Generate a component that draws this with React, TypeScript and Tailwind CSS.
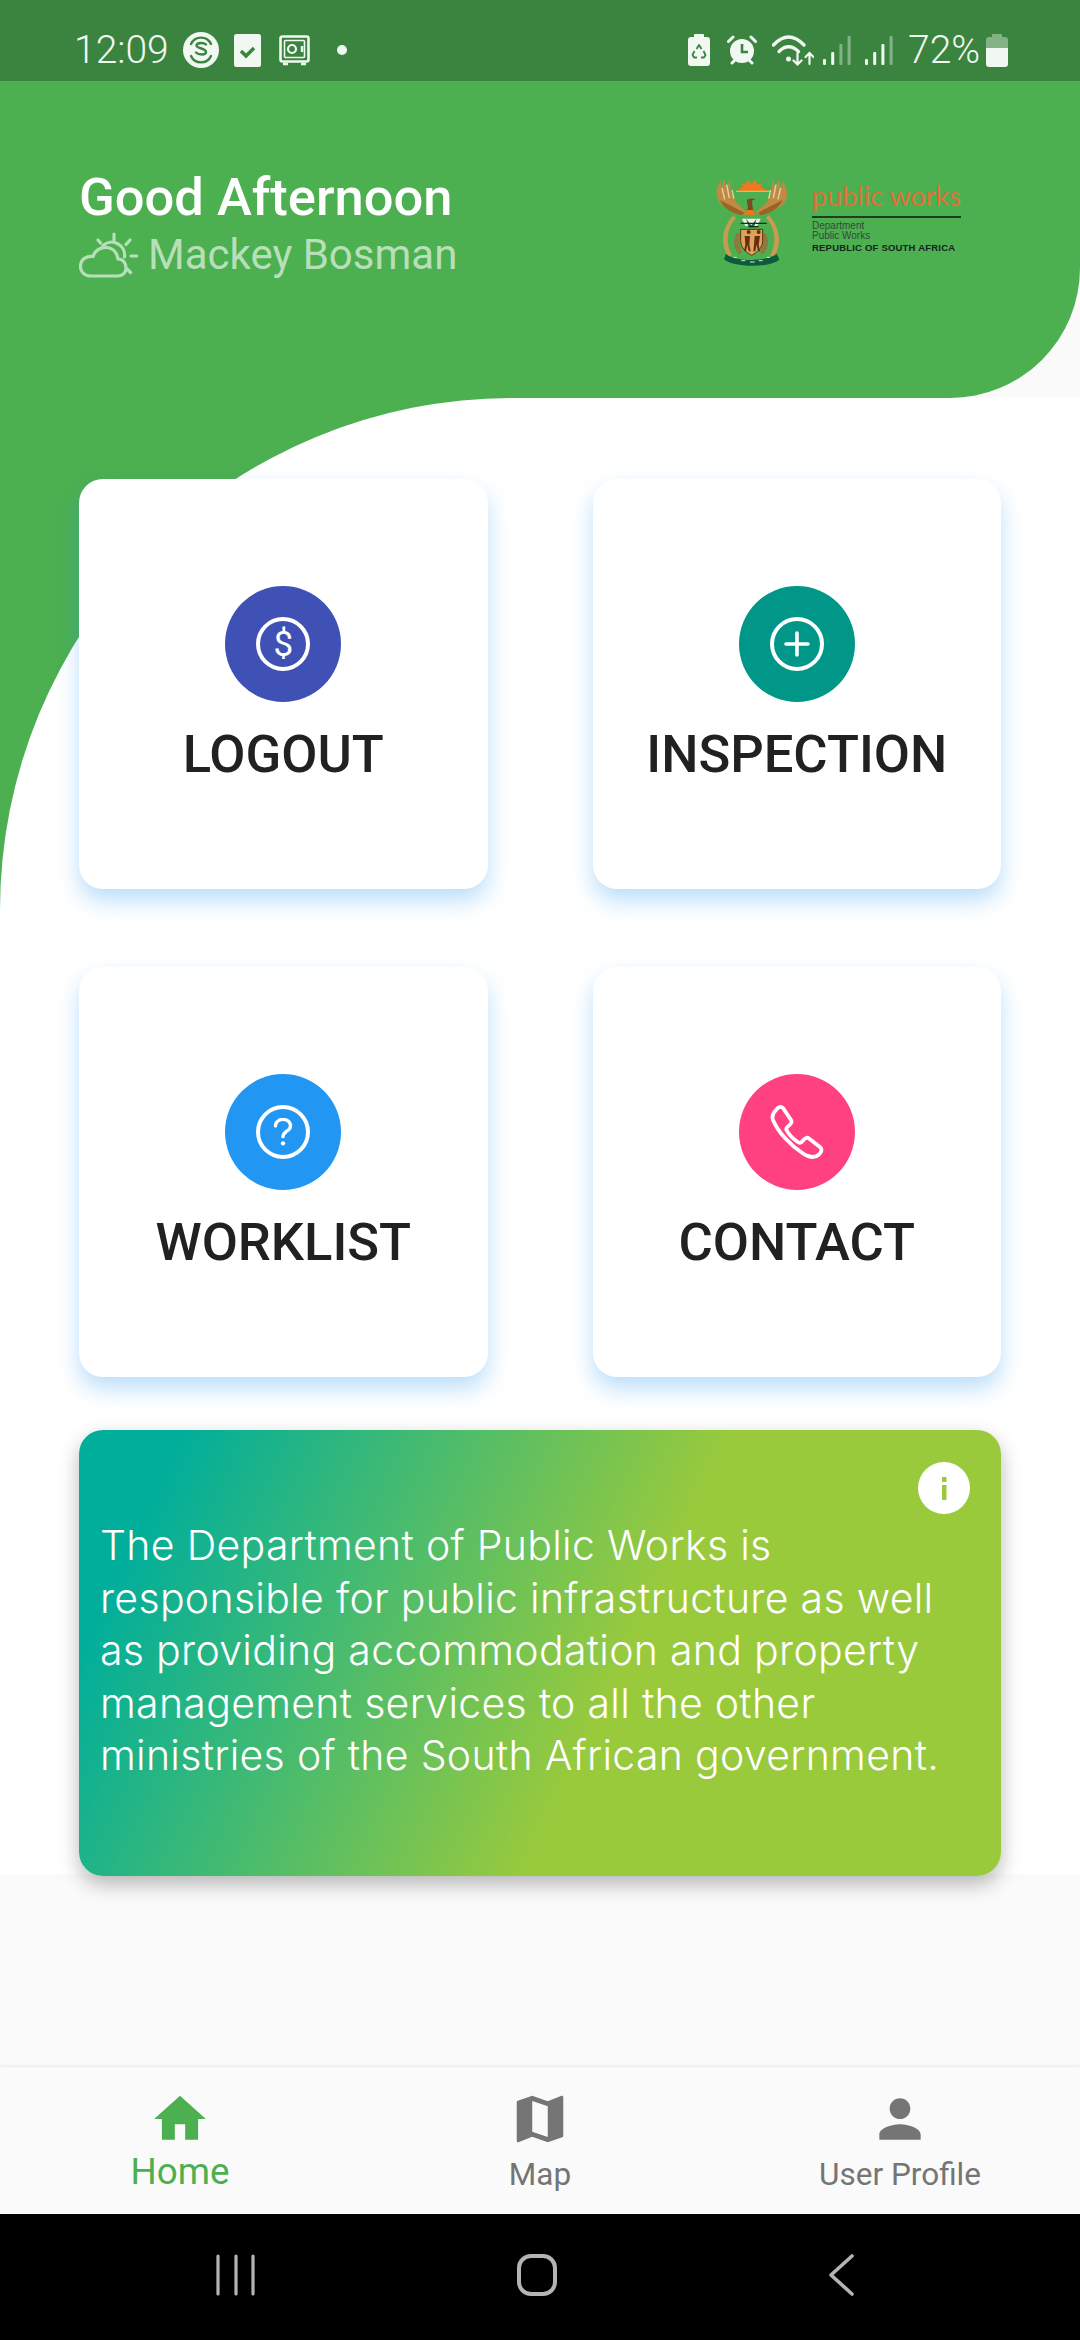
import React from "react";

const Ring = ({ children }: { children: React.ReactNode }) => (
  <div className="w-[54px] h-[54px] rounded-full border-[4.5px] border-white flex items-center justify-center">{children}</div>
);

const menu = [
  {
    label: "LOGOUT",
    bg: "bg-[#3f51b5]",
    icon: (
      <Ring>
        <span className="text-[35px] leading-none text-white">$</span>
      </Ring>
    ),
  },
  {
    label: "INSPECTION",
    bg: "bg-[#009688]",
    icon: (
      <Ring>
        <svg viewBox="0 0 30 30" className="w-[30px] h-[30px]" stroke="white" strokeWidth="3.6" strokeLinecap="round">
          <path d="M15 4v22M4 15h22" />
        </svg>
      </Ring>
    ),
  },
  {
    label: "WORKLIST",
    bg: "bg-[#2196f3]",
    icon: (
      <Ring>
        <svg viewBox="0 0 24 34" className="w-[20px] h-[29px]" fill="none" stroke="white" strokeWidth="4" strokeLinecap="round">
          <path d="M3 9a9 7.500 0 1 1 14 6c-3 2.500-5 3.500-5 7" />
          <circle cx="12" cy="30" r="2.600" fill="white" stroke="none" />
        </svg>
      </Ring>
    ),
  },
  {
    label: "CONTACT",
    bg: "bg-[#ff4081]",
    icon: (
      <svg viewBox="0 0 54 54" className="w-[54px] h-[54px]" fill="none" stroke="white" strokeWidth="3.800" strokeLinejoin="round">
        <path d="M6 5C8 2 11 1 13 3L21 15C22.500 17.500 21 19 19 20.500 17 22 15.500 23 16.500 25 19 30 24 34.500 28.500 37.500 30.500 38.800 32 37 33.500 35 35 33 37 32 39 33.500L50 42C52.500 44 51.500 47 49 49.500 45 53 39 52.500 33 48.500 20 40 8 27 3 15 1.500 11 3 8 6 5Z" />
      </svg>
    ),
  },
];

const infoLines = [
  "The Department of Public Works is",
  "responsible for public infrastructure as well",
  "as providing accommodation and property",
  "management services to all the other",
  "ministries of the South African government.",
];

const StatusLeft = () => (
  <div className="flex items-center">
    <span className="text-[39px] leading-none font-light w-[94px]">12:09</span>
    <svg viewBox="0 0 36 36" className="w-[36px] h-[36px] ml-[15px]">
      <circle cx="18" cy="18" r="18" fill="#f1f7f1" />
      <g fill="none" stroke="#3b8440" strokeWidth="2.400" strokeLinecap="round">
        <path d="M8 12a11 11 0 0 1 20 0" />
        <path d="M8 24a11 11 0 0 0 20 0" />
        <path d="M23 12.500c-2-2-9-2.500-9.500 1-.4 3 9.500 2.500 9.500 6.500 0 3.500-7.500 3-10 .5" />
      </g>
    </svg>
    <svg viewBox="0 0 27 33" className="w-[27px] h-[33px] ml-[15px]">
      <rect width="27" height="33" rx="2.500" fill="#f1f7f1" />
      <path d="M7 17l5 5 8-8" fill="none" stroke="#3b8440" strokeWidth="3.500" />
    </svg>
    <svg viewBox="0 0 31 31" className="w-[31px] h-[31px] ml-[18px]" fill="none" stroke="#f1f7f1">
      <rect x="1.500" y="1.500" width="28" height="25" rx="2" strokeWidth="2.600" />
      <rect x="5.500" y="5.500" width="20" height="17" rx="1" strokeWidth="1.600" />
      <circle cx="13" cy="14" r="4" strokeWidth="2.200" />
      <path d="M23 11v6" strokeWidth="2.400" />
      <path d="M4 29h5M22 29h5" strokeWidth="2.600" />
    </svg>
    <span className="w-[10px] h-[10px] rounded-full bg-[#f1f7f1] ml-[27px]" />
  </div>
);

const Signal = ({ solid }: { solid: number }) => (
  <svg viewBox="0 0 28 29" className="w-[28px] h-[29px]" fill="#f1f7f1">
    {[6, 13, 21, 29].map((h, i) => (
      <rect key={h} x={i * 8.2} y={29 - h} width="3" height={h} rx="1" opacity={i < solid ? 1 : 0.4} />
    ))}
  </svg>
);

const StatusRight = () => (
  <div className="flex items-center">
    <svg viewBox="0 0 22 32" className="w-[22px] h-[32px]">
      <path d="M7 0h8a1 1 0 0 1 1 1v2h3a3 3 0 0 1 3 3v23a3 3 0 0 1-3 3H3a3 3 0 0 1-3-3V6a3 3 0 0 1 3-3h3V1a1 1 0 0 1 1-1z" fill="#f1f7f1" />
      <g fill="none" stroke="#3b8440" strokeWidth="1.800" strokeLinejoin="round">
        <path d="M8.500 15l2.500-4 2.500 4" />
        <path d="M15.500 17l2 4-1.500 2.500h-3" />
        <path d="M9 23.500H6l-1.500-2.500 2-4" />
      </g>
    </svg>
    <svg viewBox="0 0 30 30" className="w-[30px] h-[30px] ml-[17px]">
      <circle cx="15" cy="16" r="12" fill="#f1f7f1" />
      <path d="M15 9v8h6" fill="none" stroke="#3b8440" strokeWidth="2.600" />
      <path d="M1.500 6.500L6 2M28.500 6.500L24 2M5 28l3-3M25 28l-3-3" stroke="#f1f7f1" strokeWidth="3" strokeLinecap="round" />
    </svg>
    <svg viewBox="0 0 42 31" className="w-[42px] h-[31px] ml-[15px]" fill="none" stroke="#f1f7f1" strokeWidth="3.300" strokeLinecap="round">
      <path d="M1.500 10Q16.500-6 32 10" />
      <path d="M7 16.500Q16.500 7 26.500 16.500" />
      <circle cx="16.500" cy="24" r="2.500" fill="#f1f7f1" stroke="none" />
      <path d="M25.500 18v11M21.500 25.500l4 4 4-4M37.500 29V18M33.500 22l4-4 4 4" strokeWidth="2.200" />
    </svg>
    <div className="ml-[9px]"><Signal solid={2} /></div>
    <div className="ml-[14px]"><Signal solid={3} /></div>
    <span className="text-[39px] leading-none font-light ml-[15px] w-[72px]">72%</span>
    <svg viewBox="0 0 22 33" className="w-[22px] h-[33px] ml-[6px]">
      <path d="M7 0h8a1 1 0 0 1 1 1v2h3a3 3 0 0 1 3 3v8H0V6a3 3 0 0 1 3-3h3V1a1 1 0 0 1 1-1z" fill="#f1f7f1" opacity="0.4" />
      <path d="M0 14h22v16a3 3 0 0 1-3 3H3a3 3 0 0 1-3-3z" fill="#f1f7f1" />
    </svg>
  </div>
);

const CloudSun = () => (
  <svg viewBox="0 0 59 46" className="w-[59px] h-[46px]" fill="none" stroke="#b7dfb9" strokeWidth="3.200" strokeLinecap="round">
    <path d="M12 44C4 44 1 38 1.500 33.500 2 27 8 23.500 14 24.500 16 18 22 15 28 15.500 34 16 38 21 39 27 44 27 47 31 47 36 47 41 43 44 39 44Z" />
    <path d="M24 13.500A13 13 0 0 1 45.500 25" />
    <path d="M35 2v6M19 8l2.500 3M51 8l-4 4.500M52 24h6M48 37l3.500 3.500" />
  </svg>
);

// rough drawing of the coat of arms, at the size it has in the header
const CoatOfArms = () => (
  <svg viewBox="0 0 300 300" className="w-[100px] h-[100px] shrink-0">
    <path d="M112 64L128 50 122 38 138 44 142 26 154 42 168 26 170 44 188 38 182 50 206 64Z" fill="#f2781f" />
    <path d="M108 62h104v4H108z" fill="#f8b04a" />
    <path d="M62 32l4 24 6-30 8 30 10-28 2 38 16 30 34 32-10 6C110 130 68 116 54 90c-8-20-4-42 8-58z" fill="#c08a45" />
    <path d="M246 32l-4 24-6-30-8 30-10-28-2 38-14 30-36 32 10 6c28-4 70-18 82-44 8-20 0-42-12-58z" fill="#c08a45" />
    <path d="M60 90l74 38-8 8C100 130 70 116 60 90zM248 90l-74 38 8 8c26-6 56-20 66-46z" fill="#9a6428" />
    <path d="M80 44l8 40M66 54l8 34M96 60l6 26M228 44l-8 40M242 54l-8 34M212 60l-6 26" stroke="#ecd2a4" strokeWidth="4" />
    <path d="M140 90c6-6 20-6 26-2l-10 4 2 22 6 18-28 4 8-24z" fill="#7d4a1c" />
    <path d="M140 120h20l6 16h-32z" fill="#e9781f" />
    <path d="M126 146h56l-10 22h-36z" fill="#eaf2ea" />
    <path d="M138 146l16 20 16-20-8 26h-16z" fill="#1e6b44" />
    <path d="M122 160h78M146 170h30" stroke="#1b2b1b" strokeWidth="4" />
    <path d="M100 136C66 170 58 226 86 262l10-6C76 222 78 176 108 144z" fill="#c99a52" />
    <path d="M206 136c34 34 42 90 14 126l-10-6c20-34 18-80-12-112z" fill="#c99a52" />
    <path d="M110 190c-14 24-8 48 8 64l8-8c-8-20-10-36-6-54zM196 190c14 24 8 48-8 64l-8-8c8-20 10-36 6-54z" fill="#8d7a3c" />
    <path d="M122 178h66v34c0 22-18 36-33 44-15-8-33-22-33-44z" fill="#dba45a" stroke="#5e3212" strokeWidth="3" />
    <path d="M140 186a6 6 0 1 1 0 .1zM170 186a6 6 0 1 1 0 .1zM134 198h16l-2 26 4 20h-6l-4-20-4 20h-6l4-20zM164 198h16l-4 26 4 20h-6l-4-20-4 20h-6l2-20z" fill="#6b2d12" />
    <path d="M78 252c30 24 120 24 152 0l8 16c-20 26-140 26-166 0z" fill="#0e5a3c" />
    <path d="M100 262h10M124 272h12M150 276h14M176 272h12M200 262h10" stroke="#d8e6d8" strokeWidth="3" />
  </svg>
);

const Logo = () => (
  <div className="flex pt-[89px] pr-[119px]">
    <CoatOfArms />
    <div className="ml-[12px] w-[149px] mt-[6px]">
      <div className="font-['Lato'] font-normal text-[27px] leading-[40px] text-[#df7238] whitespace-nowrap">public works</div>
      <div className="h-[1.500px] bg-[#1f3d22]" />
      <div className="mt-[3px] font-['Liberation_Sans'] text-[10px] leading-[10.500px] text-[#34493a]">Department</div>
      <div className="font-['Liberation_Sans'] text-[10px] leading-[10.500px] text-[#34493a]">Public Works</div>
      <div className="font-['Liberation_Sans'] font-bold text-[9.500px] leading-[11px] tracking-[0.2px] text-[#16241a] whitespace-nowrap">REPUBLIC OF SOUTH AFRICA</div>
    </div>
  </div>
);

const BottomNav = () => (
  <div className="mt-auto h-[147px] bg-[#fafafa] shadow-[0_-1px_3px_rgba(0,0,0,0.08)] flex relative">
    <div className="w-[360px] flex flex-col items-center pt-[21px] text-[#4caf50]">
      <svg viewBox="0 0 24 24" className="w-[62px] h-[62px]" fill="currentColor">
        <path d="M10 20v-6h4v6h5v-8h3L12 3 2 12h3v8z" />
      </svg>
      <span className="text-[36.750px] leading-[44px]">Home</span>
    </div>
    <div className="w-[360px] flex flex-col items-center pt-[21px] text-[#757575]">
      <svg viewBox="0 0 24 24" className="w-[62px] h-[62px]" fill="currentColor">
        <path d="M20.500 3l-.16.03L15 5.100 9 3 3.360 4.900c-.21.07-.36.25-.36.48V20.500c0 .28.22.5.5.5l.16-.03L9 18.900l6 2.100 5.640-1.900c.21-.07.36-.25.36-.48V3.500c0-.28-.22-.5-.5-.5zM15 19l-6-2.110V5l6 2.110V19z" />
      </svg>
      <span className="text-[31.500px] leading-[44px] mt-[3px]">Map</span>
    </div>
    <div className="w-[360px] flex flex-col items-center pt-[21px] text-[#757575]">
      <svg viewBox="0 0 24 24" className="w-[62px] h-[62px]" fill="currentColor">
        <path d="M12 12c2.210 0 4-1.790 4-4s-1.790-4-4-4-4 1.790-4 4 1.790 4 4 4zm0 2c-2.670 0-8 1.340-8 4v2h16v-2c0-2.660-5.330-4-8-4z" />
      </svg>
      <span className="text-[31.500px] leading-[44px] mt-[3px]">User Profile</span>
    </div>
  </div>
);

const SystemNav = () => (
  <div className="h-[126px] bg-black flex items-start pt-[40px] pl-[216px]">
    <svg viewBox="0 0 40 42" className="w-[40px] h-[42px]" stroke="#b4b4b4" strokeWidth="3.200" strokeLinecap="round">
      <path d="M2 2v38M20 2v38M37 2v38" />
    </svg>
    <svg viewBox="0 0 42 42" className="w-[42px] h-[42px] ml-[260px]" fill="none" stroke="#b4b4b4" strokeWidth="4">
      <rect x="3" y="2" width="36" height="38" rx="12" />
    </svg>
    <svg viewBox="0 0 26 42" className="w-[26px] h-[42px] ml-[270px]" fill="none" stroke="#b4b4b4" strokeWidth="3.600" strokeLinecap="round" strokeLinejoin="round">
      <path d="M24 2L3 21l21 19" />
    </svg>
  </div>
);

export default function App() {
  return (
    <div className="w-[1080px] h-[2340px] flex flex-col bg-[#fafafa] font-['Roboto',sans-serif] overflow-hidden">
      <div className="h-[81px] bg-[#3b8440] flex items-center justify-between pt-[19px] pl-[74px] pr-[72px] text-[#f1f7f1]">
        <StatusLeft />
        <StatusRight />
      </div>
      <div className="h-[317px] bg-[#4caf50] rounded-br-[130px] flex justify-between pl-[79px]">
        <div className="pt-[88px]">
          <div className="text-[52.500px] leading-[56px] font-medium text-white">Good Afternoon</div>
          <div className="flex items-end mt-[7px]">
            <CloudSun />
            <span className="ml-[10px] text-[42px] leading-[46px] text-[#b7dfb9]">Mackey Bosman</span>
          </div>
        </div>
        <Logo />
      </div>
      <div className="bg-[#4caf50]">
        <div className="h-[1476px] bg-white rounded-tl-[512px] px-[79px] pt-[81px]">
          <div className="grid grid-cols-2 gap-x-[105px] gap-y-[78px]">
            {menu.map((m) => (
              <div key={m.label} className="h-[410px] bg-white rounded-[24px] shadow-[0_12px_22px_rgba(33,150,243,0.3)] flex flex-col items-center pt-[107px]">
                <div className={`w-[116px] h-[116px] rounded-full flex items-center justify-center text-white ${m.bg}`}>{m.icon}</div>
                <div className="mt-[14px] text-[52.500px] leading-[76px] font-medium text-[#212121]">{m.label}</div>
              </div>
            ))}
          </div>
          <div className="mt-[53px] h-[446px] rounded-[24px] bg-[linear-gradient(115deg,#00ae9b_9%,#99ca3c_58%)] shadow-[0_8px_20px_rgba(0,0,0,0.28)] pl-[21px] pt-[32px] pr-[31px] text-white">
            <div className="flex justify-end">
              <svg viewBox="0 0 52 52" className="w-[52px] h-[52px]">
                <circle cx="26" cy="26" r="26" fill="white" />
                <rect x="24" y="15" width="4.500" height="5" fill="#99ca3c" />
                <rect x="24" y="23" width="4.500" height="15" fill="#99ca3c" />
              </svg>
            </div>
            <div className="mt-[5px] font-['Inter'] font-light text-[41px] tracking-[0.3px] leading-[52.500px] whitespace-nowrap">
              {infoLines.map((line) => (
                <div key={line}>{line}</div>
              ))}
            </div>
          </div>
        </div>
      </div>
      <BottomNav />
      <SystemNav />
    </div>
  );
}
